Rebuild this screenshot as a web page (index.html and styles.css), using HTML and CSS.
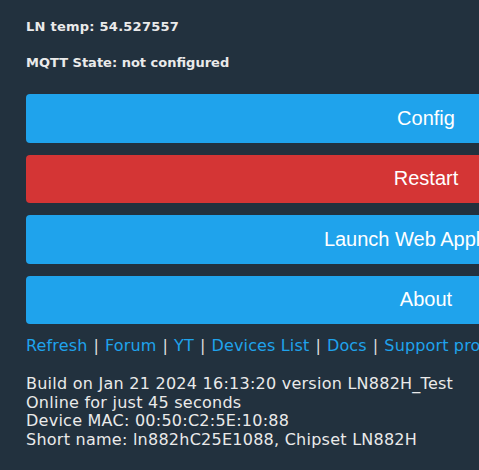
FILE: index.html
```html
<!DOCTYPE html>
<html>
<head>
<meta charset="utf-8">
<link rel="stylesheet" href="styles.css">
</head>
<body>
<div class="page">
  <h5 class="stat temp">LN temp: 54.527557</h5>
  <h5 class="stat mqtt">MQTT State: not configured</h5>
  <div class="buttons">
    <button class="btn">Config</button>
    <button class="btn red">Restart</button>
    <button class="btn launch">Launch Web Application</button>
    <button class="btn">About</button>
  </div>
  <div class="links">
    <a href="#">Refresh</a><span class="sep">|</span><a href="#">Forum</a><span class="sep">|</span><a href="#">YT</a><span class="sep">|</span><a href="#">Devices List</a><span class="sep">|</span><a href="#">Docs</a><span class="sep">|</span><a href="#">Support project</a>
  </div>
  <div class="info">
    Build on Jan 21 2024 16:13:20 version LN882H_Test<br>
    Online for just 45 seconds<br>
    Device MAC: 00:50:C2:5E:10:88<br>
    Short name: ln882hC25E1088, Chipset LN882H
  </div>
</div>
</body>
</html>
```

FILE: styles.css
```css
html, body {
  margin: 0;
  padding: 0;
  background: #22313e;
  overflow: hidden;
}
body {
  font-family: "DejaVu Sans", Verdana, sans-serif;
  color: #eaeaea;
}
.page {
  width: 800px;
  padding: 19px 26px 0 26px;
}
.stat {
  margin: 0;
  font-size: 13px;
  line-height: 15px;
  font-weight: bold;
  color: #eaeaea;
}
.temp {
  letter-spacing: 0.25px;
}
.mqtt {
  margin-top: 21px;
}
.buttons {
  margin-top: 24px;
  display: flex;
  flex-direction: column;
  gap: 12px;
}
.btn {
  display: block;
  width: 100%;
  height: 48.5px;
  border: 0;
  border-radius: 4px;
  background: #1fa3ec;
  color: #fff;
  font-family: "Liberation Sans", Arial, sans-serif;
  font-size: 20px;
  text-align: center;
  padding: 0;
}
.btn.launch {
  padding-left: 10px;
}
.btn.red {
  background: #d43535;
}
.links {
  margin-top: 12px;
  font-size: 16px;
  line-height: 19px;
  color: #dddddd;
  white-space: nowrap;
  letter-spacing: 0.15px;
}
.sep {
  padding: 0 6px;
}
.links a {
  color: #1fa3ec;
  text-decoration: none;
}
.info {
  margin-top: 20px;
  font-size: 16px;
  line-height: 18.7px;
  color: #eaeaea;
  letter-spacing: 0.25px;
}
```
